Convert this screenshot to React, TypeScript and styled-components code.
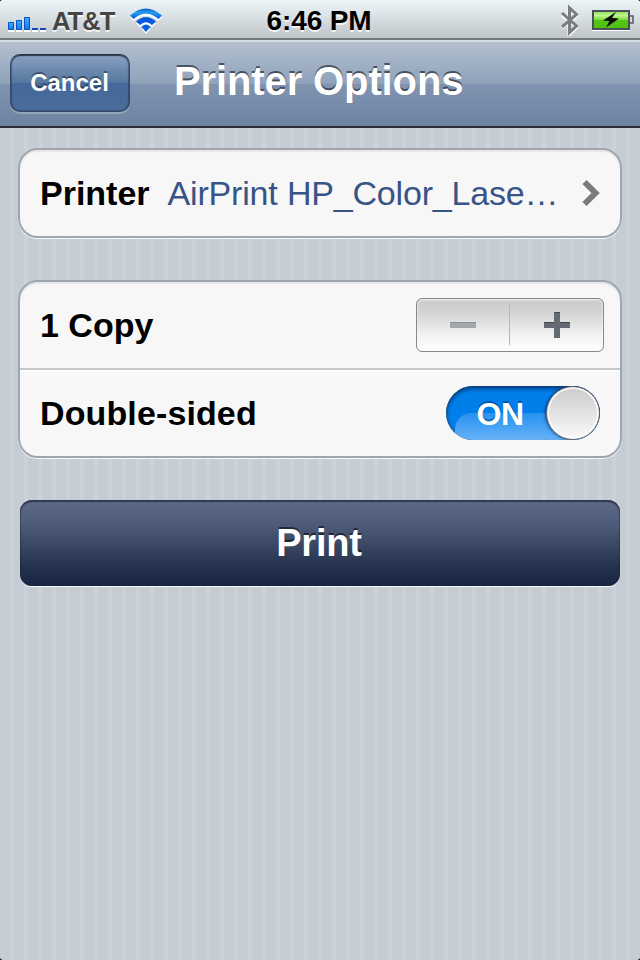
import React from "react";
import styled, { createGlobalStyle } from "styled-components";

const GlobalStyle = createGlobalStyle`
  * { box-sizing: border-box; }
  html, body { margin: 0; padding: 0; background: #000; }
  body { font-family: "Liberation Sans", Arial, Helvetica, sans-serif; overflow: hidden; }
  button { font-family: inherit; padding: 0; margin: 0; border: 0; }
`;

const Screen = styled.div`
  width: 640px;
  height: 960px;
  display: flex;
  flex-direction: column;
  overflow: hidden;
  border-radius: 3px;
  background: repeating-linear-gradient(90deg, #c5ccd4 0 10px, #cbd2d8 10px 14px);
`;

const StatusBar = styled.header`
  height: 40px;
  flex: none;
  display: grid;
  grid-template-columns: 1fr auto 1fr;
  align-items: center;
  padding: 0 6px 0 8px;
  background: linear-gradient(#eef5f8 0, #dce3e6 40%, #bec4c7 100%);
  border-bottom: 2px solid #747b7e;
`;

const StatusGroup = styled.div<{ $end?: boolean }>`
  display: flex;
  align-items: center;
  height: 38px;
  justify-content: ${(p) => (p.$end ? "flex-end" : "flex-start")};
`;

const Carrier = styled.span`
  width: 62px;
  margin-left: 5px;
  margin-right: 15px;
  padding-top: 2px;
  font-size: 25.5px;
  font-weight: 700;
  letter-spacing: -0.9px;
  line-height: 38px;
  color: #444;
  white-space: nowrap;
  text-shadow: 0 2px 0 rgba(255, 255, 255, 0.75);
`;

const Clock = styled.time`
  font-size: 28px;
  font-weight: 700;
  letter-spacing: -0.15px;
  line-height: 38px;
  padding: 2px 4px 0 0;
  color: #000;
  text-shadow: 0 2px 0 rgba(255, 255, 255, 0.75);
`;

const NavBar = styled.nav`
  height: 88px;
  flex: none;
  display: flex;
  align-items: flex-start;
  padding: 12px 10px 0;
  border-top: 2px solid #d3dbe3;
  border-bottom: 2px solid #2d3033;
  background: linear-gradient(#b3c0cf 0, #8fa2bb 50%, #8094b1 50%, #6d83a2 100%);
`;

const CancelButton = styled.button`
  width: 120px;
  height: 58px;
  border: 1px solid #34486a;
  border-top-color: #2c3440;
  border-radius: 10px;
  background: linear-gradient(#89a1c0 0, #54779f 50%, #46689a 51%, #4a6c9b 100%);
  box-shadow: inset 0 1px 1px rgba(30, 40, 55, 0.75), inset 0 0 1px 1px rgba(36, 55, 85, 0.45),
    0 2px 0 rgba(255, 255, 255, 0.25);
  color: #fff;
  font-size: 24px;
  font-weight: 700;
  letter-spacing: 0;
  line-height: 56px;
  padding-right: 1px;
  text-shadow: 0 -2px 0 rgba(0, 0, 0, 0.4);
`;

const Title = styled.h1`
  margin: 0 0 0 44px;
  font-size: 40px;
  line-height: 54px;
  font-weight: 700;
  letter-spacing: -0.12px;
  white-space: nowrap;
  color: #fff;
  text-shadow: 0 -2px 0 rgba(40, 48, 60, 0.72);
`;

const Content = styled.main`
  flex: 1;
  display: flex;
  flex-direction: column;
  gap: 42px;
  padding: 20px 18px 0;
`;

const Card = styled.section`
  border: 2px solid #a0a6b0;
  border-radius: 20px;
  background: #f7f7f7;
  box-shadow: 0 1px 0 rgba(255, 255, 255, 0.85), inset 0 2px 1px rgba(0, 0, 0, 0.07);
`;

const Row = styled.div<{ $right: number }>`
  height: 86px;
  display: flex;
  align-items: center;
  padding: 0 ${(p) => p.$right}px 0 20px;

  & + & {
    height: 88px;
    border-top: 2px solid #c6c7c8;
    box-shadow: inset 0 2px 0 #fff;
  }
`;

const Label = styled.span<{ $tracking: number }>`
  font-size: 34px;
  font-weight: 700;
  letter-spacing: ${(p) => p.$tracking}px;
  line-height: 40px;
  padding-bottom: 1px;
  white-space: nowrap;
  color: #000;
`;

const Value = styled.span`
  flex: 1;
  margin-left: 18px;
  padding-bottom: 1px;
  font-size: 34px;
  letter-spacing: -0.18px;
  line-height: 40px;
  white-space: nowrap;
  color: #385487;
`;

const Chevron = styled.svg`
  flex: none;
  width: 18px;
  height: 28px;
`;

const Stepper = styled.div`
  width: 188px;
  height: 54px;
  margin-left: auto;
  display: flex;
  align-items: center;
  border: 1px solid #85878a;
  border-radius: 6px;
  background: linear-gradient(#cbcbcb 0, #d3d3d3 25%, #f2f2f2 70%, #fff 100%);
  box-shadow: inset 0 2px 1px rgba(255, 255, 255, 0.35), inset 0 0 0 1px rgba(255, 255, 255, 0.35);
`;

const StepButton = styled.button`
  flex: 0 0 92px;
  height: 40px;
  display: flex;
  align-items: center;
  justify-content: center;
  background: none;

  & + & {
    flex-basis: 94px;
    border-left: 1px solid #b5b6b8;
  }
`;

const Switch = styled.button`
  position: relative;
  width: 154px;
  height: 54px;
  margin-left: auto;
  overflow: hidden;
  border-radius: 27px;
  background: #007eea;
  display: flex;
  align-items: center;
  box-shadow: inset 0 3px 4px rgba(0, 35, 90, 0.65), inset 0 0 2px 1px rgba(50, 85, 130, 0.75);
`;

const Gloss = styled.span`
  position: absolute;
  left: 9px;
  right: 9px;
  top: 27px;
  height: 32px;
  border-radius: 16px 16px 0 0;
  background: linear-gradient(rgba(125, 190, 250, 0.3), rgba(135, 195, 255, 0.85));
`;

const SwitchText = styled.span`
  position: relative;
  width: 48px;
  margin-left: 30px;
  font-size: 32px;
  font-weight: 700;
  letter-spacing: -0.6px;
  line-height: 54px;
  padding-top: 1px;
  color: #fff;
  text-shadow: 0 -2px 0 rgba(0, 60, 125, 0.55);
`;

const Knob = styled.span`
  position: absolute;
  right: 0;
  top: 0;
  width: 54px;
  height: 54px;
  border: 1.5px solid #626366;
  border-radius: 50%;
  background: linear-gradient(#cbcbcb, #fafafa);
  box-shadow: inset 0 0 0 2px rgba(255, 255, 255, 0.8), -1px 0 3px rgba(0, 35, 85, 0.7);
`;

const PrintButton = styled.button`
  height: 86px;
  margin: 0 2px;
  padding-right: 2px;
  border-radius: 12px;
  background: linear-gradient(#5d6a87 0, #4f5c79 28%, #26344f 75%, #172544 100%);
  box-shadow: inset 0 2px 1px rgba(29, 38, 57, 0.7), inset 1px 0 1px rgba(29, 38, 57, 0.4),
    inset -1px 0 1px rgba(29, 38, 57, 0.4), 0 1px 0 rgba(255, 255, 255, 0.85);
  color: #fff;
  font-size: 38px;
  font-weight: 700;
  letter-spacing: -0.2px;
  line-height: 86px;
  text-shadow: 0 -2px 0 rgba(0, 0, 0, 0.55);
`;

const Spacer = styled.span`
  width: 12px;
`;

const SignalIcon = () => (
  <svg width="39" height="26" viewBox="0 0 39 26" aria-hidden="true">
    <defs>
      <linearGradient id="bar" x1="0" y1="0" x2="0" y2="1">
        <stop offset="0" stopColor="#45adff" />
        <stop offset="1" stopColor="#087df0" />
      </linearGradient>
    </defs>
    <path d="M0 24h6M8 24h6M16 24h6M24 24h6M32 24h6" stroke="#fff" strokeWidth="2" />
    <g fill="url(#bar)" stroke="#0750cb">
      <path d="M.5 15.500h5v7h-5z" />
      <path d="M8.500 13.500h5v9h-5z" />
      <path d="M16.500 10.500h5v12h-5z" />
    </g>
    <path d="M24 22h6M32 22h6" stroke="#0b45bd" strokeWidth="2" />
  </svg>
);

const WifiIcon = () => (
  <svg width="34" height="28" viewBox="0 -1 34 28" aria-hidden="true">
    <defs>
      <linearGradient id="wifi" x1="0" y1="1" x2="0" y2="25" gradientUnits="userSpaceOnUse">
        <stop offset="0" stopColor="#0756bd" />
        <stop offset=".2" stopColor="#259ff0" />
        <stop offset=".45" stopColor="#0757dc" />
        <stop offset="1" stopColor="#0668f0" />
      </linearGradient>
    </defs>
    <g fill="#fff" transform="translate(0 2)">
      <path d="M1 8.500Q17-5.500 33 8.500L29.500 12Q17 1.500 4.500 12z" />
      <path d="M7 14.500Q17 5.500 27 14.500L23 18Q17 12.500 11 18z" />
      <path d="M12.500 20Q17 15 21.500 20L17 25z" />
    </g>
    <g fill="url(#wifi)">
      <path d="M1 8.500Q17-5.500 33 8.500L29.500 12Q17 1.500 4.500 12z" />
      <path d="M7 14.500Q17 5.500 27 14.500L23 18Q17 12.500 11 18z" />
      <path d="M12.500 20Q17 15 21.500 20L17 25z" />
    </g>
  </svg>
);

const BluetoothIcon = () => (
  <svg width="20" height="32" viewBox="0 0 20 32" aria-hidden="true">
    <path d="M2 10l15 12-8 8V4l8 7L2 23" transform="translate(0 1)" fill="none" stroke="#fff" strokeWidth="3" />
    <path d="M2 9l14.500 13L9.500 28.500V4l7 6.500L2 23" fill="none" stroke="#7b7d7f" strokeWidth="3" />
  </svg>
);

const BatteryIcon = () => (
  <svg width="42" height="24" viewBox="0 0 42 24" aria-hidden="true">
    <defs>
      <linearGradient id="charge" x1="0" y1="0" x2="0" y2="1">
        <stop offset="0" stopColor="#8bdc54" />
        <stop offset=".25" stopColor="#bdf68d" />
        <stop offset=".48" stopColor="#80db40" />
        <stop offset=".52" stopColor="#53c417" />
        <stop offset="1" stopColor="#4fc10c" />
      </linearGradient>
    </defs>
    <path d="M0 22h38" stroke="#fff" strokeWidth="2" />
    <path d="M1 3h36v18H1z" fill="url(#charge)" stroke="#4b4e5b" strokeWidth="2" />
    <path d="M38 8h3v7h-3" fill="#d8dce0" stroke="#555965" strokeWidth="1.500" />
    <path d="M24 4L11 12.500l6.500.5-3.500 6.500L27 10.500l-7-.5 4-6z" fill="#050805" />
  </svg>
);

export default function App() {
  return (
    <>
      <GlobalStyle />
      <Screen>
        <StatusBar>
          <StatusGroup>
            <SignalIcon />
            <Carrier>AT&amp;T</Carrier>
            <WifiIcon />
          </StatusGroup>
          <Clock>6:46 PM</Clock>
          <StatusGroup $end>
            <BluetoothIcon />
            <Spacer />
            <BatteryIcon />
          </StatusGroup>
        </StatusBar>
        <NavBar>
          <CancelButton>Cancel</CancelButton>
          <Title>Printer Options</Title>
        </NavBar>
        <Content>
          <Card>
            <Row $right={20}>
              <Label $tracking={0}>Printer</Label>
              <Value>AirPrint HP_Color_Lase…</Value>
              <Chevron viewBox="0 0 18 28" aria-hidden="true">
                <path d="M2.500 3l11 11-11 11" fill="none" stroke="#7b7b7b" strokeWidth="6" />
              </Chevron>
            </Row>
          </Card>
          <Card>
            <Row $right={16}>
              <Label $tracking={0}>1 Copy</Label>
              <Stepper>
                <StepButton aria-label="Decrease">
                  <svg width="26" height="26" viewBox="0 0 26 26">
                    <path d="M0 10h26v6H0z" fill="#a3a6aa" />
                    <path d="M0 10.500h26" stroke="#8b8e92" />
                  </svg>
                </StepButton>
                <StepButton aria-label="Increase">
                  <svg width="26" height="26" viewBox="0 0 26 26">
                    <path d="M10 0h6v10h10v6H16v10h-6V16H0v-6h10z" fill="#646973" />
                    <path d="M10 .5h6M0 10.500h10M16 10.500h10" stroke="#434850" />
                  </svg>
                </StepButton>
              </Stepper>
            </Row>
            <Row $right={20}>
              <Label $tracking={0.12}>Double-sided</Label>
              <Switch role="switch" aria-checked="true">
                <Gloss />
                <SwitchText>ON</SwitchText>
                <Knob />
              </Switch>
            </Row>
          </Card>
          <PrintButton>Print</PrintButton>
        </Content>
      </Screen>
    </>
  );
}
